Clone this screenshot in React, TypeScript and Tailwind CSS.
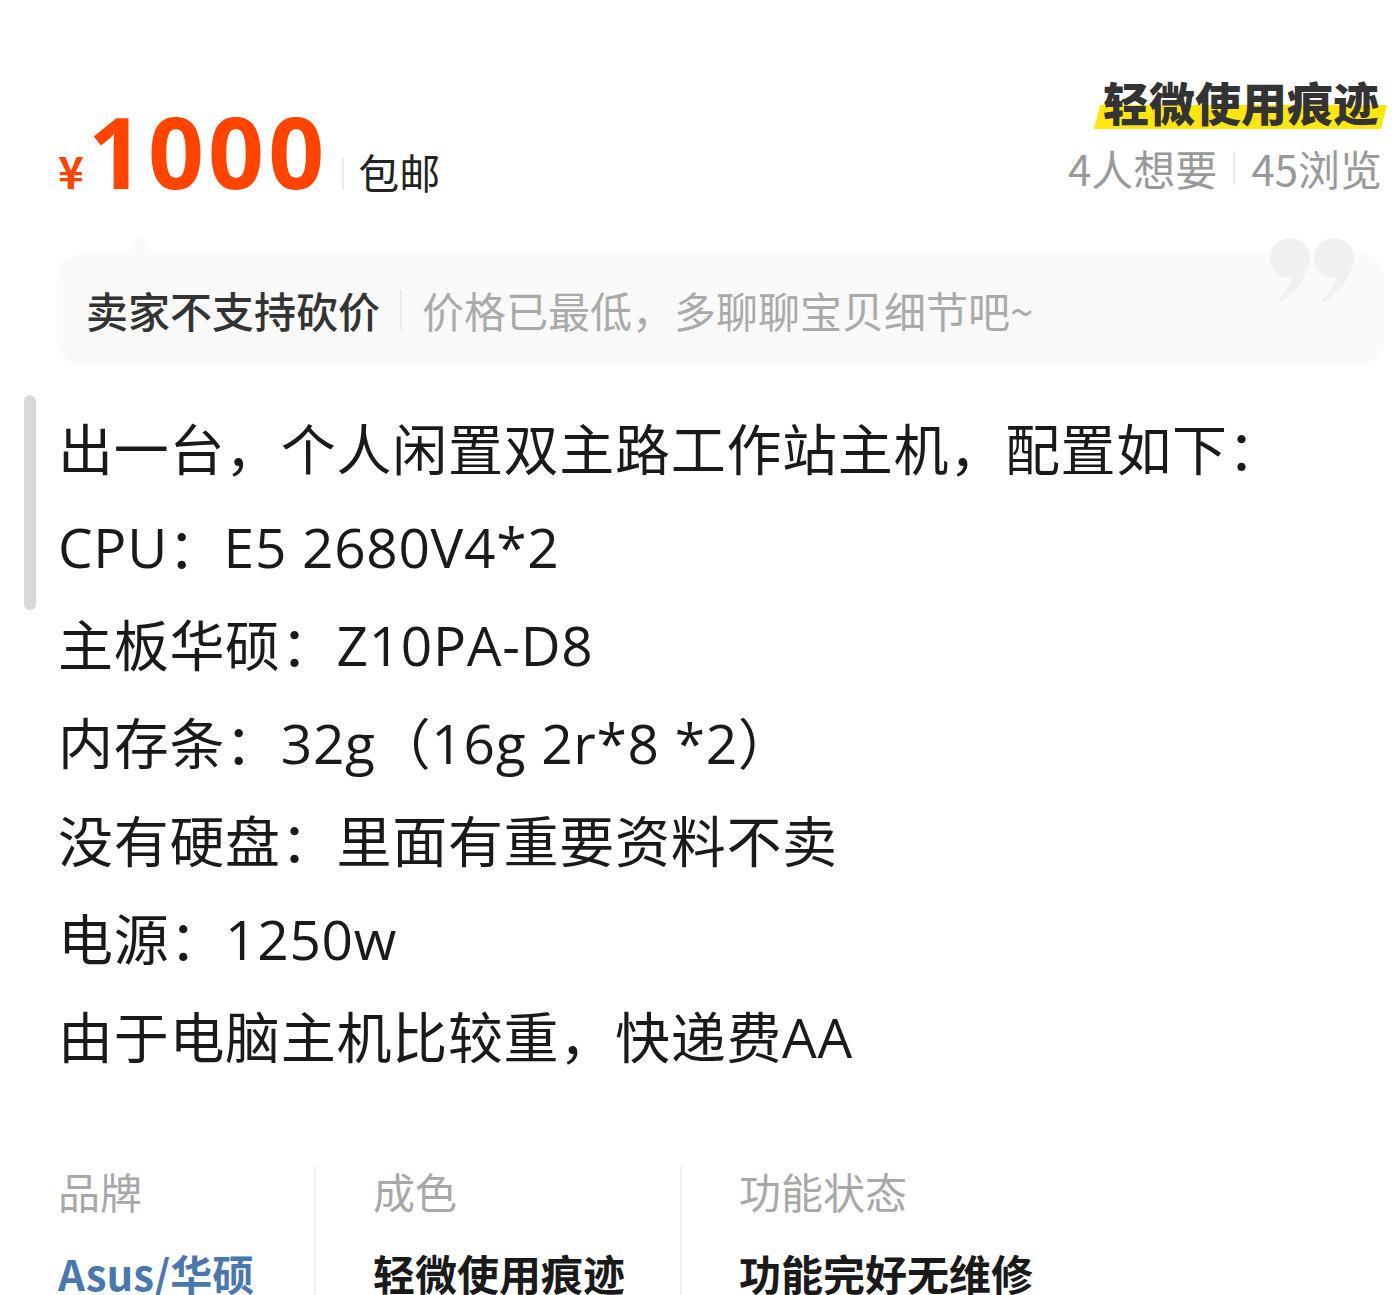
const cjk = { fontFamily: '"Noto Sans CJK SC", "Noto Sans", sans-serif' };
const body = { fontFamily: '"Open Sans", "Noto Sans CJK SC", sans-serif' };

const specs = [
  '出一台，个人闲置双主路工作站主机，配置如下：',
  'CPU：E5 2680V4*2',
  '主板华硕：Z10PA-D8',
  '内存条：32g（16g 2r*8 *2）',
  '没有硬盘：里面有重要资料不卖',
  '电源：1250w',
  '由于电脑主机比较重，快递费AA',
];

const QuoteMark = () => (
  <svg width="90" height="70" viewBox="0 0 90 70" className="absolute right-[28px] top-[-19px]">
    <g fill="#f0f0f0">
      <circle cx="24" cy="23" r="20" />
      <path d="M42 26 C42 44 28 58 14 67 L12 65 C22 55 28 44 28 36 Z" />
      <circle cx="68" cy="23" r="20" />
      <path d="M86 26 C86 44 72 58 58 67 L56 65 C66 55 72 44 72 36 Z" />
    </g>
  </svg>
);

export default function App() {
  return (
    <div className="relative w-[1392px] min-h-[1295px] bg-white overflow-hidden" style={cjk}>
      <div className="absolute left-[24px] top-[395px] h-[215px] w-[12px] rounded-full bg-[#d9d9d9]" />

      <div className="flex items-start justify-between pl-[58px] pr-[10px] pt-[72px]">
        <div className="flex items-baseline pt-[30px]">
          <span className="text-[44px] font-bold text-[#ff4400] leading-none">¥</span>
          <span
            className="ml-[4px] text-[98px] font-bold leading-none tracking-[4px] text-[#ff4400]"
            style={{ fontFamily: '"Noto Sans", sans-serif' }}
          >
            1000
          </span>
          <span className="mx-[14px] inline-block h-[32px] w-[2px] bg-[#ebebeb]" />
          <span className="text-[41px] leading-none text-[#222]">包邮</span>
        </div>
        <div className="flex flex-col items-end">
          <div className="relative pr-[3px]">
            <div className="absolute left-[-6px] right-[-2px] top-[33px] h-[24px] -skew-x-[14deg] bg-[#ffe60f]" />
            <span className="relative text-[46px] font-black leading-[58px] text-[#333]">轻微使用痕迹</span>
          </div>
          <div className="mt-[13px] flex items-center text-[42px] leading-[50px] text-[#999]">
            <span>4人想要</span>
            <span className="mx-[16px] inline-block h-[34px] w-[2px] bg-[#ebebeb]" />
            <span>45浏览</span>
          </div>
        </div>
      </div>

      <div className="relative ml-[57px] mr-[8px] mt-[54px] h-[111px] rounded-[24px] bg-[#fafafa] flex items-center pl-[29px]">
        <svg width="44" height="24" viewBox="0 0 44 24" className="absolute left-[61px] top-[-22px]">
          <path d="M0 24 C10 24 12 20 16 10 C19 2 25 2 28 10 C32 20 34 24 44 24 Z" fill="#fafafa" />
        </svg>
        <QuoteMark />
        <span className="text-[42px] font-medium leading-none text-[#333]">卖家不支持砍价</span>
        <span className="mx-[20px] inline-block h-[40px] w-[2px] bg-[#ebebeb]" />
        <span className="text-[42px] leading-none text-[#aaa]">价格已最低，多聊聊宝贝细节吧~</span>
      </div>

      <div className="mt-[35px] pl-[58px]" style={body}>
        {specs.map((line) => (
          <div key={line} className="text-[55px] leading-[98px] tracking-[0.7px] text-[#1a1a1a]">
            {line}
          </div>
        ))}
      </div>

      <div className="mt-[80px] flex pl-[58px]">
        <div className="w-[258px] border-r-2 border-[#f0f0f0]">
          <div className="text-[42px] leading-[50px] text-[#a8a8a8]">品牌</div>
          <div className="mt-[32px] text-[42px] font-bold leading-[50px] text-[#4a78ad]">Asus/华硕</div>
        </div>
        <div className="w-[366px] border-r-2 border-[#f0f0f0] pl-[57px]">
          <div className="text-[42px] leading-[50px] text-[#a8a8a8]">成色</div>
          <div className="mt-[32px] text-[42px] font-bold leading-[50px] text-[#1a1a1a]">轻微使用痕迹</div>
        </div>
        <div className="pl-[57px]">
          <div className="text-[42px] leading-[50px] text-[#a8a8a8]">功能状态</div>
          <div className="mt-[32px] text-[42px] font-bold leading-[50px] text-[#1a1a1a]">功能完好无维修</div>
        </div>
      </div>
    </div>
  );
}
